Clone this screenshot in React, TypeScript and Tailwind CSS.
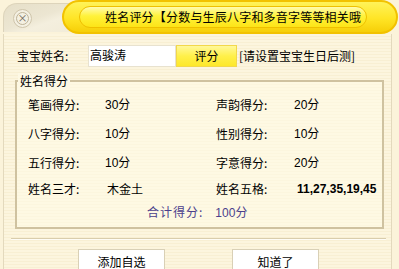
import React from "react";

const cjk = "font-['Noto_Sans_CJK_SC','Noto_Sans',sans-serif]";
const num = "font-['Liberation_Sans','Noto_Sans_CJK_SC',sans-serif]";

function Row({ l1, v1, l2, v2, h }: { l1: string; v1: string; l2: string; v2: string; h: string }) {
  return (
    <div className={`flex items-center ${h}`}>
      <div className="w-[88px] pl-[11px] text-[12px] text-black whitespace-nowrap">{l1}</div>
      <div className="w-[111px] text-[12px] text-black whitespace-nowrap">
        <span className={num}>{v1.slice(0, 2)}</span>
        {v1.slice(2)}
      </div>
      <div className="w-[78px] text-[12px] text-black whitespace-nowrap">{l2}</div>
      <div className="text-[12px] text-black whitespace-nowrap">
        <span className={num}>{v2.slice(0, 2)}</span>
        {v2.slice(2)}
      </div>
    </div>
  );
}

export default function App() {
  return (
    <div className={`w-[399px] h-[269px] overflow-hidden bg-[#fbf3da] ${cjk}`}>
      {/* title bar */}
      <div className="flex items-start h-[34px]">
        <div className="ml-[3px] mt-[3px] h-[29px] w-[82px] rounded-tl-[14px] bg-[linear-gradient(160deg,#e6dfc8_0%,#ece6d2_45%,#f4efde_60%,#f1ebd8_100%)] border-t border-l border-[#ddd4bb] flex items-center">
          <div className="ml-[9px] w-[19px] h-[19px] rounded-full bg-[#f4f0e2] border border-[#cfc5ab] flex items-center justify-center">
            <div className="w-[13px] h-[13px] rounded-full border border-[#bdb398] flex items-center justify-center text-[10px] leading-none text-[#6e6655]">×</div>
          </div>
        </div>
        <div className="-ml-[23px] w-[336px] h-[34px] rounded-full bg-[linear-gradient(180deg,#fff35a_0%,#ffe526_55%,#f6cf08_100%)] border-2 border-[#f2c200] flex items-center">
          <div className="ml-[15px] w-[288px] h-[22px] rounded-full bg-[linear-gradient(180deg,#fffbb0_0%,#fff23a_45%,#fde418_100%)] border border-[#efc000] flex items-center">
            <span className="pl-[25px] text-[12px] text-black tracking-[0.2px] whitespace-nowrap">姓名评分【分数与生辰八字和多音字等等相关哦</span>
          </div>
        </div>
      </div>

      {/* body */}
      <div className="ml-[3px] w-[389px] h-[235px] border-l border-r border-[#e3d9bd] bg-[repeating-linear-gradient(180deg,#fcf5de_0px,#fcf5de_2px,#f8efd3_2px,#f8efd3_3px)]">
        {/* name row */}
        <div className="flex items-center pt-[11px] h-[22px] box-content">
          <div className="pl-[13px] w-[84px] text-[12px] text-black whitespace-nowrap">宝宝姓名:</div>
          <div className="w-[88px] h-[22px] bg-white border border-[#e8e2cf] text-[12px] leading-[17px] pl-[1px] text-black">高骏涛</div>
          <div className="w-[61px] h-[22px] bg-[linear-gradient(180deg,#fff89a_0%,#fff04a_50%,#fde82a_100%)] border border-[#f2d84a] flex items-center justify-center text-[12px] text-black">评分</div>
          <div className="ml-[2px] text-[12px] text-black whitespace-nowrap">[请设置宝宝生日后测]</div>
        </div>

        {/* group */}
        <fieldset className="mt-[6px] ml-[11px] w-[369px] border-2 border-[#cfc2a0] bg-[#fffbe6]/60 pb-[3px]">
          <legend className="ml-[1px] px-[2px] text-[12px] leading-[16px] text-black bg-[#fdf8e4]">姓名得分</legend>
          <div className="pt-[1px]">
            <Row l1="笔画得分:" v1="30分" l2="声韵得分:" v2="20分" h="h-[29px]" />
            <Row l1="八字得分:" v1="10分" l2="性别得分:" v2="10分" h="h-[29px]" />
            <Row l1="五行得分:" v1="10分" l2="字意得分:" v2="20分" h="h-[29px]" />
            <div className="flex items-center h-[23px]">
              <div className="w-[88px] pl-[11px] text-[12px] text-black whitespace-nowrap">姓名三才:</div>
              <div className="w-[111px] pl-[2px] text-[12px] text-black whitespace-nowrap">木金土</div>
              <div className="w-[81px] text-[12px] text-black whitespace-nowrap">姓名五格:</div>
              <div className={`${num} text-[12px] font-bold text-black whitespace-nowrap`}>11,27,35,19,45</div>
            </div>
            <div className="flex items-center h-[24px] pl-[130px] text-[12px] text-[#4b3f8c] whitespace-nowrap tracking-[1px]">
              合计得分: <span className="ml-[12px] tracking-normal"><span className={num}>100</span>分</span>
            </div>
          </div>
        </fieldset>

        {/* separator */}
        <div className="mt-[9px] ml-[7px] w-[375px] h-[2px] border-t border-[#d9cdac] bg-white/70" />

        {/* buttons */}
        <div className="flex mt-[9px]">
          <div className="ml-[74px] w-[87px] h-[26px] bg-white border border-[#d9d0b6] flex items-center justify-center text-[12px] text-black">添加自选</div>
          <div className="ml-[67px] w-[87px] h-[26px] bg-white border border-[#d9d0b6] flex items-center justify-center text-[12px] text-black">知道了</div>
        </div>
      </div>
    </div>
  );
}
